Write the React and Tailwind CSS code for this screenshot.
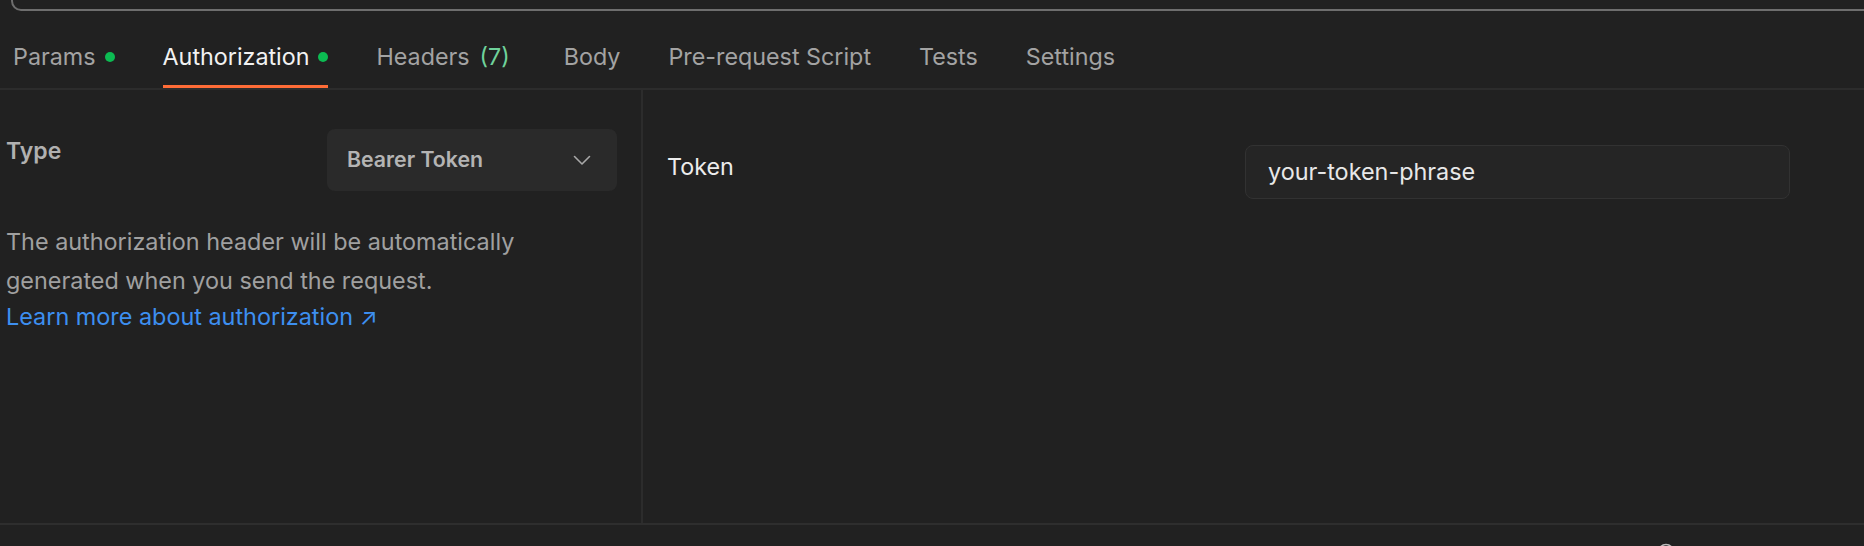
import React from "react";

const Dot = () => <span className="inline-block w-[10px] h-[10px] rounded-full bg-[#0cbb52]" />;

function Tab({ label, active, dot, count, extra }) {
  return (
    <div
      className={
        "flex items-center gap-[9px] pb-[15px] border-b-[3px] " +
        (active ? "border-[#ff6c37] text-[#f2f2f2]" : "border-transparent text-[#a3a3a3]") +
        (extra ? " mr-[54px]" : " mr-[48px]")
      }
    >
      <span className="leading-[26px] text-[23.3px]">
        {label}
        {count && <span className="ml-[10px] text-[#6fd29b]">{count}</span>}
      </span>
      {dot && <Dot />}
    </div>
  );
}

export default function App() {
  return (
    <div
      className="w-[1864px] h-[546px] bg-[#212121] overflow-hidden flex flex-col"
      style={{ fontFamily: "Inter, 'Noto Sans', sans-serif" }}
    >
      {/* top input edge */}
      <div className="h-[11px] shrink-0 overflow-hidden">
        <div className="ml-[11px] mt-[-40px] h-[51px] w-[1900px] border-2 border-[#6e6e6e] rounded-[10px]" />
      </div>

      {/* tab bar */}
      <div className="h-[77px] shrink-0 flex items-end pl-[13px]">
        <Tab label="Params" dot />
        <Tab label="Authorization" dot active />
        <Tab label="Headers" count="(7)" extra />
        <Tab label="Body" />
        <Tab label="Pre-request Script" />
        <Tab label="Tests" />
        <Tab label="Settings" />
      </div>
      <div className="h-[2px] shrink-0 bg-[#2c2c2c]" />

      {/* content */}
      <div className="h-[433px] shrink-0 flex">
        <div className="w-[641px] shrink-0 pl-[6px] pr-[24px] pt-[39px]">
          <div className="flex justify-between items-start">
            <div className="mt-[9px] text-[23px] leading-[26px] font-semibold text-[#b0b0b0]">Type</div>
            <div className="w-[290px] h-[62px] rounded-[8px] bg-[#2a2a2a] flex items-center justify-between pl-[20px] pr-[26px]">
              <span className="text-[21.3px] font-semibold text-[#b4b4b4]">Bearer Token</span>
              <svg width="18" height="11" viewBox="0 0 18 11" fill="none">
                <polyline points="1.5,1.5 9,9 16.5,1.5" stroke="#a8a8a8" strokeWidth="1.6" strokeLinecap="round" strokeLinejoin="round" />
              </svg>
            </div>
          </div>
          <p className="mt-[31px] text-[23.4px] leading-[39px] text-[#a0a0a0]">
            The authorization header will be automatically
            <br />
            generated when you send the request.
          </p>
          <div className="text-[23.4px] leading-[33px] text-[#3d8ff0]">Learn more about authorization ↗</div>
        </div>
        <div className="w-[2px] shrink-0 bg-[#2c2c2c]" />
        <div className="flex-1 pl-[24px] pt-[55px]">
          <div className="flex items-start">
            <div className="w-[578px] shrink-0 mt-[9px] text-[23.3px] leading-[26px] text-[#ececec]">Token</div>
            <div className="w-[545px] h-[54px] rounded-[8px] border border-[#323232] bg-[#252525] flex items-center pl-[22px]">
              <span className="text-[23.4px] text-[#e8e8e8]">your-token-phrase</span>
            </div>
          </div>
        </div>
      </div>
      <div className="h-[2px] shrink-0 bg-[#2e2e2e]" />

      {/* bottom strip */}
      <div className="flex-1 pl-[1657px] pt-[18px]">
        <svg width="18" height="18" viewBox="0 0 18 18" fill="none">
          <circle cx="9" cy="9" r="7.5" stroke="#bdbdbd" strokeWidth="1.6" />
        </svg>
      </div>
    </div>
  );
}
